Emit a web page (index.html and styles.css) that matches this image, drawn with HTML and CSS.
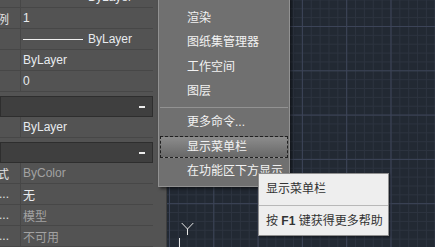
FILE: index.html
```html
<!DOCTYPE html>
<html lang="zh-CN">
<head>
    <meta charset="UTF-8">
    <title>特性</title>
    <link rel="stylesheet" href="styles.css">
</head>
<body>
<div class="app">
    <!-- 特性选项板 -->
    <div class="palette">
        <div class="list">
            <div class="group">
                <div class="row"><span class="label"></span><span class="value"><i class="ltline"></i>ByLayer</span></div>
                <div class="row"><span class="label">线型比例</span><span class="value">1</span></div>
                <div class="row"><span class="label"></span><span class="value"><i class="ltline"></i>ByLayer</span></div>
                <div class="row"><span class="label"></span><span class="value">ByLayer</span></div>
                <div class="row"><span class="label"></span><span class="value">0</span></div>
            </div>
            <div class="header"><span class="dash"></span></div>
            <div class="group">
                <div class="row"><span class="label"></span><span class="value">ByLayer</span></div>
            </div>
            <div class="header"><span class="dash"></span></div>
            <div class="group">
                <div class="row"><span class="label">打印样式</span><span class="value dim">ByColor</span></div>
                <div class="row"><span class="label">...</span><span class="value">无</span></div>
                <div class="row"><span class="label">...</span><span class="value dim">模型</span></div>
                <div class="row"><span class="label">...</span><span class="value dim">不可用</span></div>
            </div>
        </div>
    </div>
    <!-- 绘图区 -->
    <div class="canvas">
        <svg class="ucs" width="30" height="27" viewBox="0 0 30 27">
            <path d="M11.7 3 L17.5 9 L23.3 3 M17.5 9 V15 M9.5 18 V27" stroke="#e8e8e8" stroke-width="1" fill="none"/>
        </svg>
    </div>

    <!-- 右键菜单 -->
    <div class="menu">
        <div class="item">渲染</div>
        <div class="item">图纸集管理器</div>
        <div class="item">工作空间</div>
        <div class="item">图层</div>
        <div class="sep"></div>
        <div class="item">更多命令...</div>
        <div class="item active">显示菜单栏</div>
        <div class="item">在功能区下方显示</div>
    </div>

    <!-- 提示 -->
    <div class="tip">
        <div class="tip-title">显示菜单栏</div>
        <div class="tip-help">按 <b>F1</b> 键获得更多帮助</div>
    </div>
</div>
</body>
</html>
```

FILE: styles.css
```css
*{
    margin: 0;
    padding: 0;
    box-sizing: border-box;
}
body{
    width: 435px;
    height: 247px;
    overflow: hidden;
    font-size: 12px;
    font-family: "Liberation Sans", "Noto Sans CJK SC", sans-serif;
}
.app{
    position: relative;
    display: flex;
    height: 247px;
    overflow: hidden;
    background: #232a34;
}
/*左侧特性面板*/
.palette{
    width: 167px;
    flex: none;
    background: #535353;
    border-right: 1px solid #3e3e3e;
}
.list{
    width: 153px;
    margin-top: -13px;
}
.row{
    display: flex;
    height: 21px;
    border-bottom: 1px solid #474747;
}
.label{
    width: 21px;
    flex: none;
    display: flex;
    align-items: center;
    justify-content: flex-end;
    padding-right: 11px;
    overflow: hidden;
    white-space: nowrap;
    border-right: 1px solid #474747;
    color: #e2e2e2;
}
.value{
    display: flex;
    align-items: center;
    padding-left: 2px;
    color: #e8ebef;
    white-space: nowrap;
}
.value.dim{
    color: #a2a2a2;
}
.ltline{
    width: 60px;
    height: 1px;
    background: #f0f0f0;
    margin-right: 5px;
}
.header{
    height: 21px;
    margin-top: 4px;
    display: flex;
    align-items: center;
    justify-content: flex-end;
    padding-right: 7px;
    background: #3f3f3f;
    border: 1px solid #2e2e2e;
}
.dash{
    width: 6px;
    height: 2px;
    background: #ececec;
}
/*绘图区网格*/
.canvas{
    flex: 1;
    position: relative;
    background-color: #222933;
    background-image:
        linear-gradient(to right, #3c4458 1px, transparent 1px),
        linear-gradient(to bottom, #3c4458 1px, transparent 1px),
        linear-gradient(to right, #2c333f 1px, transparent 1px),
        linear-gradient(to bottom, #2c333f 1px, transparent 1px);
    background-size: 44.3px 44.3px, 44.3px 44.3px, 8.86px 8.86px, 8.86px 8.86px;
    background-position: 2px 26px;
}
.ucs{
    position: absolute;
    left: 3px;
    top: 220px;
}
/*右键菜单*/
.menu{
    position: absolute;
    left: 158px;
    top: -20px;
    width: 132px;
    height: 207px;
    padding: 24.5px 1px 0;
    background: #707070;
    border: 1px solid #929292;
    box-shadow: 2px 2px 3px rgba(0, 0, 0, .5);
}
.item{
    height: 24.5px;
    line-height: 24.5px;
    padding-left: 27px;
    color: #f2f2f2;
    white-space: nowrap;
}
.item.active{
    height: 22px;
    line-height: 20px;
    margin: 1.25px 0;
    padding-left: 26px;
    background: linear-gradient(#8c8c8c, #686868);
    border: 1px dashed #202020;
}
.sep{
    height: 1px;
    margin: 3px 0 2.5px;
    background: #929292;
}
/*提示框*/
.tip{
    position: absolute;
    left: 258px;
    top: 173px;
    width: 131px;
    height: 63px;
    background: #eeeeee;
    border: 1px solid #8f8f8f;
    box-shadow: 1px 1px 2px rgba(0, 0, 0, .4);
    color: #333;
}
.tip-title{
    height: 32px;
    line-height: 31px;
    padding-left: 7px;
    border-bottom: 1px solid #b8b8b8;
}
.tip-help{
    height: 29px;
    line-height: 30px;
    padding-left: 7px;
    white-space: nowrap;
}
```
